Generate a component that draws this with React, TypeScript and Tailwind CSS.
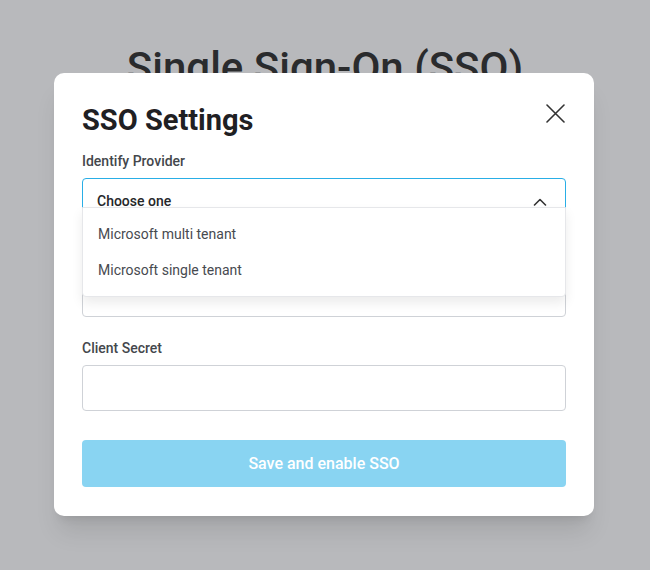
import { useState } from "react"

export default function App() {
  const [open] = useState(true)
  const providers = ["Microsoft multi tenant", "Microsoft single tenant"]

  return (
    <div className="relative min-h-screen w-full bg-[#b8b9bc] font-['Roboto',sans-serif]">
      {/* Page behind the modal */}
      <h1 className="pt-[44px] text-center text-[42px] leading-[48px] font-medium text-[#2a2b2d]">
        Single Sign-On (SSO)
      </h1>

      {/* Modal */}
      <div className="absolute inset-x-0 top-[73px] pl-[54px]">
        <div className="w-[540px] rounded-[10px] bg-white px-[28px] pt-[30px] pb-[29px] shadow-xl">
          <div className="mb-[14px] flex items-start justify-between">
            <h2 className="text-[29px] leading-[34px] font-bold text-[#1f2023]">SSO Settings</h2>
            <button className="mt-[1px] mr-[1px] text-[#333]">
              <svg width="19" height="19" viewBox="0 0 19 19" fill="none" stroke="currentColor" strokeWidth="1.6" strokeLinecap="round">
                <path d="M1 1L18 18M18 1L1 18" />
              </svg>
            </button>
          </div>

          <label className="block text-sm leading-5 font-medium text-[#44474c]">Identify Provider</label>
          <div className="relative mt-[7px]">
            <div className="flex h-[46px] items-center justify-between rounded-[4px] border border-[#29aee6] px-[14px]">
              <span className="text-sm font-medium text-[#26272a]">Choose one</span>
              <svg width="14" height="8" viewBox="0 0 14 8" fill="none" stroke="#333" strokeWidth="1.6" strokeLinecap="round" strokeLinejoin="round" className="mr-[4px] mt-[1px]">
                <path d="M1.5 7L7 1.5L12.5 7" />
              </svg>
            </div>
            {open && (
              <ul className="absolute inset-x-0 top-[29px] z-10 rounded-b-[4px] border border-[#e6e7ea] bg-white py-[8px] shadow-[0_6px_12px_rgba(0,0,0,0.08)]">
                {providers.map((p) => (
                  <li key={p} className="flex h-[36px] items-center px-[15px] text-sm text-[#474a50]">
                    {p}
                  </li>
                ))}
              </ul>
            )}
          </div>

          <label className="mt-[20px] block text-sm leading-5 font-medium text-[#44474c]">Client ID</label>
          <input className="mt-[7px] block h-[46px] w-full rounded-[4px] border border-[#cfd2d7] px-[14px] text-sm outline-none" />

          <label className="mt-[21px] block text-sm leading-5 font-medium text-[#44474c]">Client Secret</label>
          <input className="mt-[7px] block h-[46px] w-full rounded-[4px] border border-[#cfd2d7] px-[14px] text-sm outline-none" />

          <button className="mt-[29px] h-[47px] w-full rounded-[4px] bg-[#89d4f2] text-base font-medium text-white">
            Save and enable SSO
          </button>
        </div>
      </div>
    </div>
  )
}
